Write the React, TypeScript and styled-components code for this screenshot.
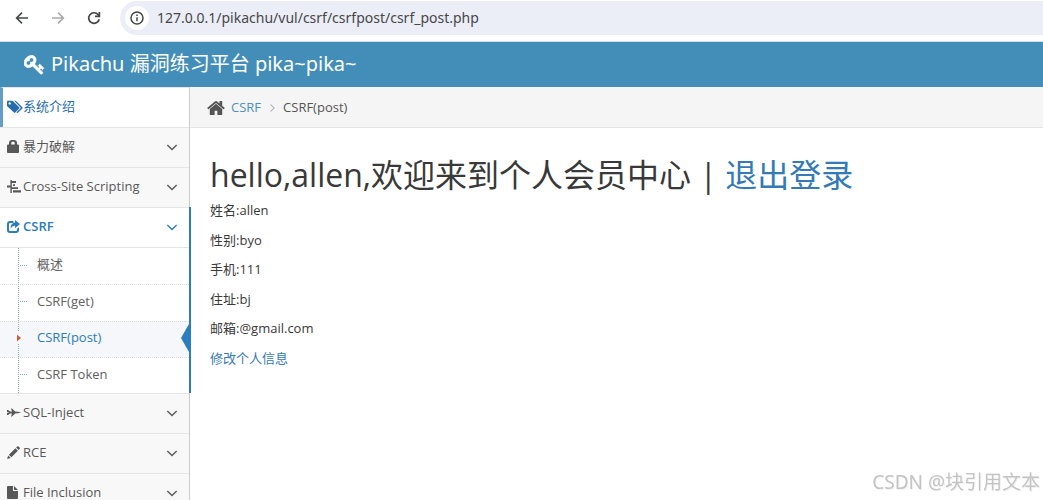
import React from "react";
import styled, { createGlobalStyle } from "styled-components";

const GlobalStyle = createGlobalStyle`
  * { box-sizing: border-box; }
  body {
    margin: 0;
    background: #fff;
    color: #393939;
    font: 13px/1.5 "Open Sans", "Noto Sans CJK SC", sans-serif;
  }
  a { text-decoration: none; }
  svg { display: block; flex: none; }
`;

const Shell = styled.div`
  display: flex;
  flex-direction: column;
  height: 100vh;
  overflow: hidden;
`;

/* Browser bar */

const Toolbar = styled.div`
  display: flex;
  flex: none;
  align-items: flex-start;
  height: 42px;
  padding: 1px 0 0 14px;
  border-bottom: 1px solid #d3e0ea;
`;

const ToolButton = styled.button<{ $dim?: boolean }>`
  display: grid;
  place-items: center;
  width: 16px;
  height: 34px;
  margin-right: 20px;
  padding: 0;
  border: 0;
  background: none;
  color: ${(p) => (p.$dim ? "#aaa" : "#444746")};
`;

const AddressBar = styled.form`
  display: flex;
  flex: 1;
  align-items: center;
  gap: 8px;
  height: 34px;
  margin-left: -2px;
  padding-left: 5px;
  border-radius: 17px 0 0 17px;
  background: #ebeef7;
`;

const SiteInfo = styled.button`
  display: grid;
  place-items: center;
  width: 24px;
  height: 24px;
  padding: 0;
  border: 0;
  border-radius: 50%;
  background: #fff;
  color: #444746;
`;

const AddressInput = styled.input`
  flex: 1;
  padding: 0;
  border: 0;
  outline: 0;
  background: none;
  color: #474747;
  font: 14px/20px "Noto Sans", sans-serif;
`;

/* Page header */

const Header = styled.header`
  flex: none;
  height: 45px;
  padding: 0 24px;
  background: #438eb9;
`;

const Brand = styled.a`
  display: inline-flex;
  align-items: center;
  gap: 6px;
  height: 44px;
  color: #fff;
  font: 20px/20px "Noto Sans", "Noto Sans CJK SC", sans-serif;

  svg {
    stroke: currentColor;
    stroke-width: 70px;
  }
`;

const Columns = styled.div`
  display: flex;
  flex: 1;
  min-height: 0;
`;

/* Sidebar */

const Sidebar = styled.nav`
  flex: none;
  width: 190px;
  border-right: 1px solid #ccc;
  background: #f2f2f2;
`;

const MenuList = styled.ul`
  margin: 0;
  padding: 0;
  list-style: none;
`;

const MenuItem = styled.li<{ $open?: boolean }>`
  position: relative;
  ${(p) =>
    p.$open &&
    `&::after {
      content: "";
      position: absolute;
      inset: 0 -2px 0 auto;
      width: 2px;
      background: #2b7dbc;
    }`}
`;

const MenuLink = styled.a<{ $open?: boolean; $hover?: boolean }>`
  display: flex;
  align-items: center;
  height: 40px;
  padding: 0 10px 2px ${(p) => (p.$hover ? 4 : 7)}px;
  border-top: 1px solid #e5e5e5;
  border-left: ${(p) => (p.$hover ? "3px solid #629cc9" : "0")};
  background: ${(p) => (p.$open || p.$hover ? "#fff" : "#f8f8f8")};
  color: ${(p) => (p.$open ? "#2b7dbc" : p.$hover ? "#266cad" : "#585858")};
  font-weight: ${(p) => (p.$open ? 600 : 400)};
`;

const MenuIcon = styled.span`
  display: flex;
  width: 16px;
`;

const MenuText = styled.span`
  flex: 1;
  white-space: nowrap;
`;

const SubMenu = styled.ul`
  position: relative;
  display: grid;
  grid-auto-rows: 1fr;
  height: 146px;
  margin: 0;
  padding: 0;
  border-top: 1px solid #e5e5e5;
  background: #fff;
  list-style: none;

  &::before {
    content: "";
    position: absolute;
    z-index: 1;
    inset: 0 auto 0 18px;
    border-left: 1px dotted #8bb2d0;
  }
`;

const SubItem = styled.li<{ $active?: boolean }>`
  position: relative;

  &:not(:first-child) > a {
    border-top: 1px dotted #dcdcdc;
  }

  &::before {
    content: "";
    position: absolute;
    z-index: 1;
    top: 17px;
    left: 20px;
    width: 7px;
    border-top: ${(p) => (p.$active ? "0" : "1px dotted #8bb2d0")};
  }
`;

const SubLink = styled.a<{ $active?: boolean }>`
  display: flex;
  align-items: center;
  height: 100%;
  padding: 0 0 2px 37px;
  background: ${(p) => (p.$active ? "#f5f7fa" : "#fff")};
  color: ${(p) => (p.$active ? "#2b7dbc" : "#616161")};
`;

const Caret = styled.svg`
  position: absolute;
  z-index: 2;
  top: 11px;
  left: 16px;
`;

const Pointer = styled.svg`
  position: absolute;
  top: 3px;
  right: 0;
`;

/* Content */

const Main = styled.main`
  flex: 1;
  min-width: 0;
`;

const Breadcrumb = styled.nav`
  display: flex;
  align-items: center;
  height: 41px;
  padding: 1px 17px 0;
  border-bottom: 1px solid #e5e5e5;
  background: #f5f5f5;
  color: #555;

  a { margin: 0 9px 0 6px; color: #4c8fbd; }
`;

const Separator = styled.span`
  margin-right: 8px;
  color: #b2b6bf;
`;

const Content = styled.section`
  padding: 24px 20px;
`;

const Title = styled.h1`
  margin: 0 0 3px;
  font-size: 32px;
  font-weight: 400;
  line-height: 46px;
`;

const Line = styled.p`
  margin: 0 0 10px;
`;

const TextLink = styled.a`
  color: #337ab7;
`;

const Watermark = styled.div`
  position: fixed;
  right: 3px;
  bottom: 4px;
  color: #c4c4c4;
  font: 19px/28px "Noto Sans", "Noto Sans CJK SC", sans-serif;
  text-shadow: 1px 1px 0 #f2f2f2;
`;

/* Icons */

type GlyphProps = { d: string; size: number; box?: string; width?: number };

const Glyph = ({ d, size, box = "0 0 1792 1792", width }: GlyphProps) => (
  <svg width={width ?? size} height={size} viewBox={box} fill="currentColor" aria-hidden="true">
    <path fillRule="evenodd" d={d} />
  </svg>
);

const KEY =
  "M832 512q0-80-56-136t-136-56-136 56-56 136q0 42 19 83-41-19-83-19-80 0-136 56t-56 136 56 136 136 56 136-56 56-136q0-42-19-83 41 19 83 19 80 0 136-56t56-136zm851 704q0 17-49 66t-66 49q-9 0-28.5-16t-36.5-33-38.5-40-24.5-26l-96 96 220 220q28 28 28 68 0 42-39 81t-81 39q-40 0-68-28l-671-671q-176 131-365 131-163 0-265.5-102.5t-102.5-265.5q0-160 95-313t248-248 313-95q163 0 265.5 102.5t102.5 265.5q0 189-131 365l355 355 96-96q-3-3-26-24.5t-40-38.5-33-36.5-16-28.5q0-17 49-66t66-49q13 0 23 10 6 6 46 44.5t82 79.5 86.5 86 73 78 28.5 41z";
const HOME =
  "M1472 992v480q0 26-19 45t-45 19h-384v-384h-256v384h-384q-26 0-45-19t-19-45v-480q0-1 .5-3t.5-3l575-474 575 474q1 2 1 6zm223-69l-62 74q-8 9-21 11h-3q-13 0-21-7l-692-577-692 577q-12 8-24 7-13-2-21-11l-62-74q-8-10-7-23.5t11-21.5l719-599q32-26 76-26t76 26l244 204v-195q0-14 9-23t23-9h192q14 0 23 9t9 23v408l219 182q10 8 11 21.5t-7 23.5z";
const ANGLE_DOWN =
  "M1395 736q0 13-10 23l-466 466q-10 10-23 10t-23-10l-466-466q-10-10-10-23t10-23l50-50q10-10 23-10t23 10l393 393 393-393q10-10 23-10t23 10l50 50q10 10 10 23z";
const ANGLE_RIGHT =
  "M1171 960q0 13-10 23l-466 466q-10 10-23 10t-23-10l-50-50q-10-10-10-23t10-23l393-393-393-393q-10-10-10-23t10-23l50-50q10-10 23-10t23 10l466 466q10 10 10 23z";

const TAGS = "M0 1.5Q0 .8.8.8H5.6L12.2 7.2Q12.8 7.9 12.2 8.5L8.2 12.6Q7.6 13.2 7 12.6L0 6ZM2.7 2.2A1.2 1.2 0 1 0 2.7 4.6 1.2 1.2 0 1 0 2.7 2.2ZM7.2.8H8.8L15.3 7.2Q15.9 7.9 15.3 8.5L11.2 12.6Q10.5 13.3 9.8 12.7L9.5 12.3 13.6 8.3Q14 7.9 13.6 7.4Z";
const LOCK = "M2 4.6V3Q2 0 5 0H7Q10 0 10 3V4.6H11Q12 4.6 12 5.6V12Q12 13 11 13H1Q0 13 0 12V5.6Q0 4.6 1 4.6ZM4.3 4.6H7.7V3Q7.7 1.8 6.6 1.8H5.4Q4.3 1.8 4.3 3Z";
const ALIGN = "M3.4 0H4.8V13H3.4ZM0 5.6H3.4V7.4H0ZM4.8 1H9V3H4.8ZM6 4.2H8V6H6ZM4.8 7.2H11V9H4.8ZM6 10.2H14V12.4H6Z";
const SHARE = "M6.4 1V3H3.2Q2 3 2 4.2V9.8Q2 11 3.2 11H8.8Q10 11 10 9.8V8.8L12 7.2V10Q12 13 9 13H3Q0 13 0 10V4Q0 1 3 1ZM8 0 13 4.1 8 8.2V5.8Q5.2 5.5 3.5 8.6 3.6 2.6 8 2.4Z";
const JET = "M0 4H1.2L3 5.6H5L4 2.4H5L8.2 5.6 11 5.8Q14 6.2 14 6.5T11 7.2L8.2 7.4 5 10.6H4L5 7.4H3L1.2 9H0V7.1L1.8 6.8V6.2L0 5.9Z";
const PENCIL = "M10.2.6Q10.9-.1 11.6.6L12.6 1.6Q13.3 2.3 12.6 3L11.6 4 9.1 1.6ZM8.4 2.3 10.9 4.8 4.4 11.2 1.9 8.7ZM1.2 9.4 3.7 11.9 0 13Z";
const FILE = "M0 1Q0 0 1 0H6V5H11V12Q11 13 10 13H1Q0 13 0 12ZM7 0 11 4H7Z";

const menu = [
  { label: "系统介绍", icon: TAGS, w: 16, hover: true },
  { label: "暴力破解", icon: LOCK, w: 12 },
  { label: "Cross-Site Scripting", icon: ALIGN, w: 14 },
  {
    label: "CSRF",
    icon: SHARE,
    w: 13,
    children: ["概述", "CSRF(get)", "CSRF(post)", "CSRF Token"],
  },
  { label: "SQL-Inject", icon: JET, w: 14 },
  { label: "RCE", icon: PENCIL, w: 13 },
  { label: "File Inclusion", icon: FILE, w: 11 },
];

const current = "CSRF(post)";

const profile = [
  ["姓名", "allen"],
  ["性别", "byo"],
  ["手机", "111"],
  ["住址", "bj"],
  ["邮箱", "@gmail.com"],
];

export default function App() {
  return (
    <Shell>
      <GlobalStyle />
      <Toolbar>
        <ToolButton type="button" aria-label="Back">
          <svg width="16" height="16" viewBox="0 0 16 16" fill="none" stroke="currentColor" strokeWidth="1.6">
            <path d="M14 8H3M8 2.6 2.6 8 8 13.4" />
          </svg>
        </ToolButton>
        <ToolButton type="button" aria-label="Forward" $dim>
          <svg width="16" height="16" viewBox="0 0 16 16" fill="none" stroke="currentColor" strokeWidth="1.6">
            <path d="M2 8H13M8 2.6 13.4 8 8 13.4" />
          </svg>
        </ToolButton>
        <ToolButton type="button" aria-label="Reload">
          <svg width="16" height="16" viewBox="0 0 16 16" fill="none" stroke="currentColor" strokeWidth="1.7">
            <path d="M13.2 9.2A5.3 5.3 0 1 1 12.2 4.8L13 5.8M13.4 2V6.4H9" />
          </svg>
        </ToolButton>
        <AddressBar onSubmit={(e) => e.preventDefault()}>
          <SiteInfo type="button" aria-label="Site information">
            <svg width="14" height="14" viewBox="0 0 14 14" fill="none" stroke="currentColor" strokeWidth="1.5">
              <circle cx="7" cy="7" r="6" />
              <path d="M7 6.2V10.2M7 3.6V5" />
            </svg>
          </SiteInfo>
          <AddressInput aria-label="Address" defaultValue="127.0.0.1/pikachu/vul/csrf/csrfpost/csrf_post.php" />
        </AddressBar>
      </Toolbar>

      <Header>
        <Brand href="#">
          <Glyph d={KEY} size={21} />
          Pikachu 漏洞练习平台 pika~pika~
        </Brand>
      </Header>

      <Columns>
        <Sidebar>
          <MenuList>
            {menu.map((m) => (
              <MenuItem key={m.label} $open={!!m.children}>
                <MenuLink href="#" $open={!!m.children} $hover={m.hover}>
                  <MenuIcon>
                    <Glyph d={m.icon} size={13} width={m.w} box={`0 0 ${m.w} 13`} />
                  </MenuIcon>
                  <MenuText>{m.label}</MenuText>
                  {!m.hover && <Glyph d={ANGLE_DOWN} size={18} width={14} box="196 0 1400 1792" />}
                </MenuLink>
                {m.children && (
                  <SubMenu>
                    {m.children.map((c) => (
                      <SubItem key={c} $active={c === current}>
                        <SubLink href="#" $active={c === current}>
                          {c}
                        </SubLink>
                        {c === current && (
                          <>
                            <Caret width="5" height="12" viewBox="0 0 5 12" aria-hidden="true">
                              <path d="M0 0H5V12H0Z" fill="#f5f7fa" />
                              <path d="M1 2.5 5 6 1 9.5Z" fill="#c86139" />
                            </Caret>
                            <Pointer width="8" height="28" viewBox="0 0 8 28" aria-hidden="true">
                              <path d="M8 0V28L0 14Z" fill="#2b7dbc" />
                            </Pointer>
                          </>
                        )}
                      </SubItem>
                    ))}
                  </SubMenu>
                )}
              </MenuItem>
            ))}
          </MenuList>
        </Sidebar>

        <Main>
          <Breadcrumb aria-label="Breadcrumb">
            <Glyph d={HOME} size={20} width={18} box="64 0 1664 1792" />
            <a href="#">CSRF</a>
            <Separator>
              <Glyph d={ANGLE_RIGHT} size={16} width={5} box="560 64 640 1792" />
            </Separator>
            <span>CSRF(post)</span>
          </Breadcrumb>
          <Content>
            <Title>
              hello,allen,欢迎来到个人会员中心 | <TextLink href="#">退出登录</TextLink>
            </Title>
            {profile.map(([name, value]) => (
              <Line key={name}>
                {name}:{value}
              </Line>
            ))}
            <TextLink href="#">修改个人信息</TextLink>
          </Content>
        </Main>
      </Columns>
      <Watermark>CSDN @块引用文本</Watermark>
    </Shell>
  );
}
